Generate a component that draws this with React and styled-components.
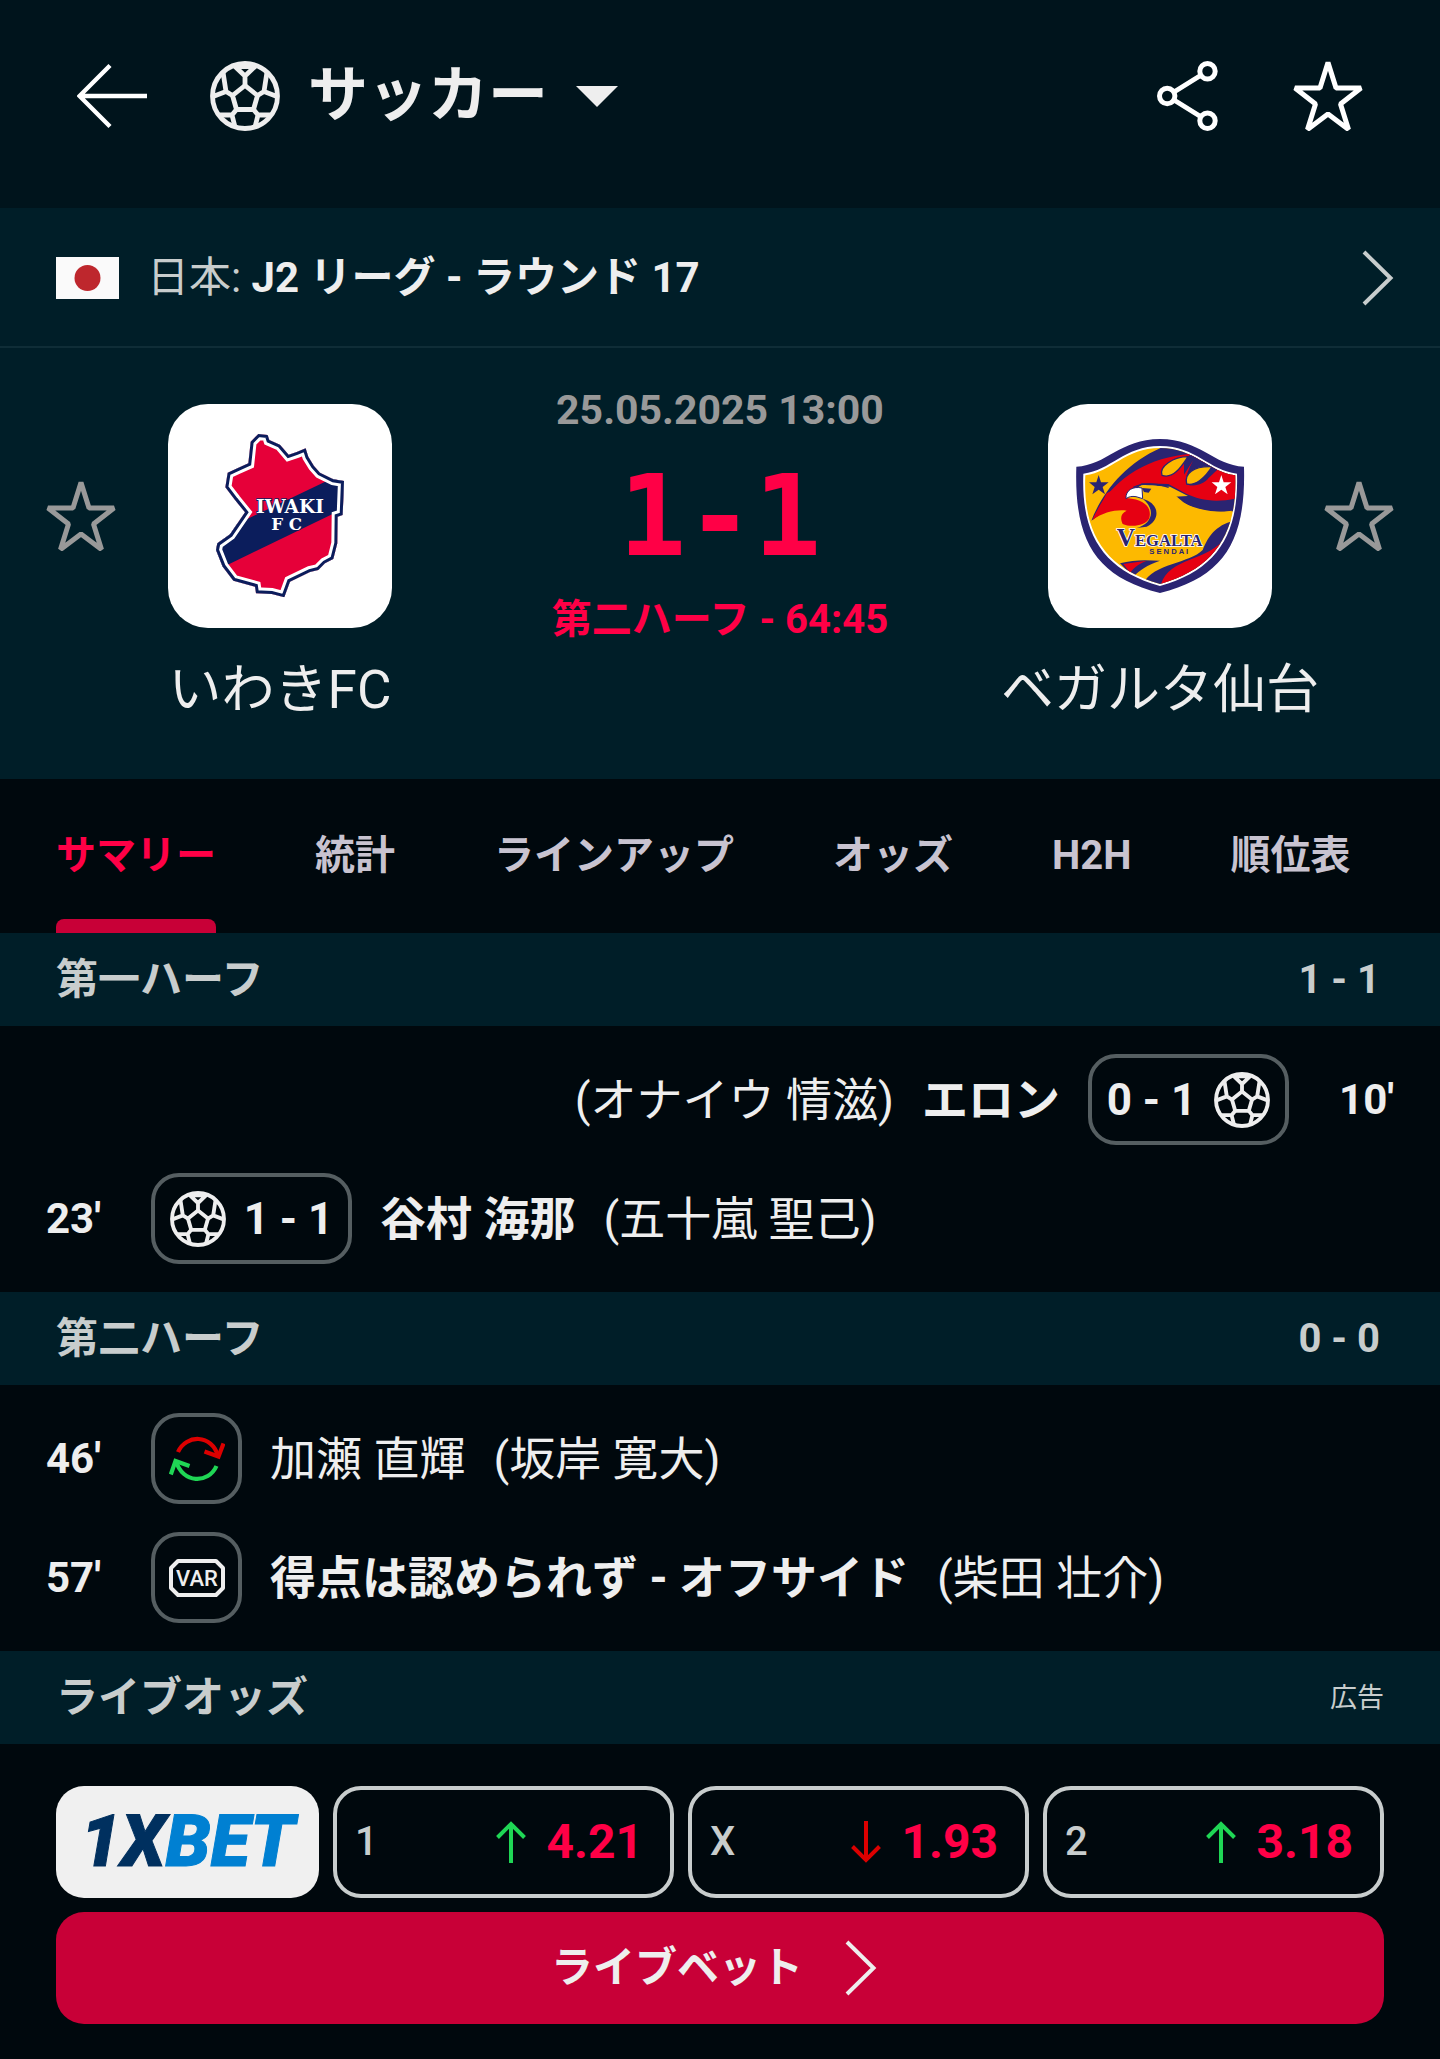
import React, { useState } from "react";
import styled, { createGlobalStyle } from "styled-components";

const color = {
  page: "#00080d",
  header: "#00141c",
  band: "#001e28",
  line: "#0f2d37",
  text: "#eeeeee",
  soft: "#c8cdcd",
  muted: "#999999",
  live: "#ff0046",
  brand: "#c80037",
  up: "#1fd655",
  down: "#dc0000",
  outline: "#555e61",
};

const GlobalStyle = createGlobalStyle`
  *, *::before, *::after { box-sizing: border-box; }
  body {
    margin: 0;
    background: ${color.page};
    color: ${color.text};
    font-family: Roboto, "Noto Sans CJK JP", sans-serif;
    font-size: 40px;
    line-height: 48px;
  }
  button {
    margin: 0;
    padding: 0;
    border: 0;
    background: none;
    color: inherit;
    font: inherit;
    cursor: pointer;
  }
  a { color: inherit; text-decoration: none; }
  svg { display: block; flex: none; }
`;

const Page = styled.div`
  min-height: 100vh;
`;

const Header = styled.header`
  display: flex;
  align-items: center;
  padding: 61px 77px 77px;
  background: ${color.header};
`;

const IconButton = styled.button`
  display: block;
  color: ${(p) => p.$tone || "#ffffff"};
`;

const SportButton = styled.button`
  display: flex;
  align-items: center;
  gap: 28px;
  margin-left: 63px;
  font-size: 60px;
  font-weight: 700;
  line-height: 70px;
`;

const HeaderActions = styled.div`
  display: flex;
  gap: 75px;
  margin-left: auto;
`;

const League = styled.a`
  display: flex;
  align-items: center;
  height: 140px;
  padding: 2px 46px 0 56px;
  border-bottom: 2px solid ${color.line};
  background: ${color.band};
`;

const LeagueName = styled.span`
  flex: 1;
  margin-left: 28px;
  color: ${color.soft};
  font-size: 42px;

  strong { color: ${color.text}; }
`;

const Match = styled.section`
  display: flex;
  align-items: flex-start;
  padding: 40px 46px 55px;
  background: ${color.band};
`;

const Side = styled.div`
  display: flex;
  flex-direction: ${(p) => (p.$away ? "row-reverse" : "row")};
  padding-top: 16px;
`;

const FavouriteSlot = styled.div`
  display: flex;
  align-items: center;
  height: 224px;
`;

const Team = styled.a`
  display: flex;
  flex-direction: column;
  align-items: center;
  gap: 28px;
  width: 328px;
  font-size: 53px;
  line-height: 68px;
`;

const Crest = styled.span`
  width: 224px;
  height: 224px;
  border-radius: 40px;
  background: #ffffff;
  overflow: hidden;
`;

const Centre = styled.div`
  flex: 1;
  display: flex;
  flex-direction: column;
  align-items: center;
  padding-top: 2px;
  font-weight: 700;
  line-height: 40px;
  white-space: nowrap;
`;

const Kickoff = styled.time`
  color: ${color.muted};
  font-size: 41px;
`;

const Score = styled.div`
  padding: 30px 0 28px;
  color: ${color.live};
  font-family: "DejaVu Sans Mono", monospace;
  font-size: 112px;
  line-height: 112px;
`;

const Status = styled.div`
  color: ${color.live};
`;

const Tabs = styled.nav`
  display: flex;
  gap: 99px;
  height: 154px;
  padding: 0 56px;
`;

const Tab = styled.button`
  position: relative;
  color: ${(p) => (p.$active ? color.live : "#c8c3d0")};
  font-weight: 700;
  white-space: nowrap;

  &::after {
    content: "";
    position: absolute;
    inset: auto 0 0;
    height: 14px;
    border-radius: 8px 8px 0 0;
    background: ${(p) => (p.$active ? color.brand : "transparent")};
  }
`;

const SectionBar = styled.div`
  display: flex;
  align-items: center;
  justify-content: space-between;
  height: 93px;
  padding: 0 56px;
  background: ${color.band};
  color: ${color.soft};
`;

const SectionTitle = styled.h2`
  margin: 0;
  font-size: 42px;
  font-weight: 700;
`;

const PeriodScore = styled.span`
  padding-right: 4px;
  font-weight: 700;
`;

const AdNote = styled.small`
  font-size: 27px;
`;

const Events = styled.ul`
  display: flex;
  flex-direction: column;
  gap: 28px;
  margin: 0;
  padding: 28px 46px;
  list-style: none;
`;

const Event = styled.li`
  display: flex;
  flex-direction: ${(p) => (p.$away ? "row-reverse" : "row")};
  align-items: center;
  gap: 28px;
  height: 91px;
  font-size: 46px;
  white-space: nowrap;
`;

const Minute = styled.span`
  width: 77px;
  font-size: 42px;
  font-weight: 700;
  text-align: ${(p) => (p.$away ? "right" : "left")};
`;

const Badge = styled.span`
  display: flex;
  flex-direction: ${(p) => (p.$away ? "row-reverse" : "row")};
  align-items: center;
  justify-content: center;
  gap: 18px;
  width: ${(p) => (p.$wide ? "201px" : "91px")};
  height: 91px;
  border: 4px solid ${color.outline};
  border-radius: 28px;
  font-size: 44px;
  font-weight: 700;
`;

const Odds = styled.section`
  display: grid;
  grid-template-columns: 263px repeat(3, 1fr);
  gap: 14px;
  padding: 42px 56px 35px;
`;

const Bookmaker = styled.a`
  display: flex;
  align-items: center;
  justify-content: center;
  height: 112px;
  border-radius: 28px;
  background: #f0f0f0;
  color: #0080d2;
  font-size: 72px;
  font-style: italic;
  font-weight: 900;
  -webkit-text-stroke: 1px currentColor;

  span { color: #00305f; }
`;

const Odd = styled.button`
  display: flex;
  align-items: center;
  gap: 20px;
  height: 112px;
  padding: 0 27px 0 18px;
  border: 4px solid ${color.soft};
  border-radius: 28px;
  color: ${(p) => (p.$rise ? color.up : color.down)};
`;

const Outcome = styled.span`
  margin-right: auto;
  color: ${color.soft};
  font-weight: 500;
`;

const Price = styled.span`
  color: ${color.live};
  font-size: 48px;
  font-weight: 700;
`;

const BetButton = styled.button`
  grid-column: 1 / -1;
  display: flex;
  align-items: center;
  justify-content: center;
  gap: 42px;
  height: 112px;
  padding-right: 12px;
  border-radius: 28px;
  background: ${color.brand};
  font-size: 42px;
  font-weight: 700;
`;

const BackIcon = () => (
  <svg width="70" height="70" viewBox="0 0 70 70" fill="none" stroke="currentColor" strokeWidth="4.4" aria-hidden="true">
    <path d="M33 4.5 2.5 35 33 65.5M3 35H70" />
  </svg>
);

const ShareIcon = () => (
  <svg width="61" height="70" viewBox="0 0 61 70" fill="none" stroke="currentColor" strokeWidth="5" aria-hidden="true">
    <circle cx="50.5" cy="10.2" r="7.7" />
    <circle cx="10.2" cy="35" r="7.7" />
    <circle cx="50.5" cy="59.8" r="7.7" />
    <path d="M17 31 43.5 14.5M17 39l26.5 16.5" />
  </svg>
);

const StarIcon = () => (
  <svg width="70" height="70" viewBox="0 0 70 70" fill="none" stroke="currentColor" strokeWidth="5" strokeLinejoin="bevel" aria-hidden="true">
    <path d="M35 1.5 43 27H68L47.5 43 55.5 68.5 35 53 14.5 68.5 22.5 43 2 27H27Z" />
  </svg>
);

const BallIcon = ({ size }) => (
  <svg width={size} height={size} viewBox="0 0 70 70" fill="none" stroke="currentColor" strokeWidth="4.8" strokeLinejoin="round" aria-hidden="true">
    <circle cx="35" cy="35" r="32.5" />
    <path d="M35 24.500 47.500 34.500 43.500 48.500H26.500L22.500 34.500Z" />
    <path d="M35 24.500V15L25 5.500H45L35 15" />
    <path d="M13 11 16 30.500 22.500 34.500M16 30.500 3 35.500M57 11 54 30.500 47.500 34.500M54 30.500 67 35.500" />
    <path d="M26.500 48.500 22 54H9M22 54 25 66M43.500 48.500 48 54H61M48 54 45 66" />
  </svg>
);

const CaretIcon = () => (
  <svg width="42" height="21" viewBox="0 0 42 21" fill="currentColor" aria-hidden="true">
    <path d="M0 0H42L21 21Z" />
  </svg>
);

const ChevronIcon = ({ tone = "currentColor" }) => (
  <svg width="32" height="56" viewBox="0 0 32 56" fill="none" stroke={tone} strokeWidth="4" aria-hidden="true">
    <path d="M2 2 28.5 28 2 54" />
  </svg>
);

const FlagJapan = () => (
  <svg width="63" height="42" viewBox="0 0 63 42" role="img" aria-label="日本">
    <path fill="#fafafa" d="M0 0H63V42H0Z" />
    <circle cx="31.5" cy="21" r="13" fill="#be272d" />
  </svg>
);

const ArrowIcon = ({ rise }) => (
  <svg width="30" height="42" viewBox="0 0 30 42" fill="none" stroke="currentColor" strokeWidth="4" aria-hidden="true">
    <path d={rise ? "M15 42V3M1.5 16.5 15 3 28.5 16.5" : "M15 0V39M1.5 25.5 15 39 28.5 25.5"} />
  </svg>
);

const SwapIcon = () => (
  <svg width="56" height="46" viewBox="0 0 56 46" fill="none" strokeWidth="4.2" aria-hidden="true">
    <g stroke={color.down}>
      <path d="M9 16C17-2 43-2 49 20" />
      <path d="M35.5 15.5 49.5 20.500 54.5 7.5" />
    </g>
    <g stroke={color.up}>
      <path d="M47.5 30C39.5 48 13.5 48 7 25" />
      <path d="M20.5 30 6.5 25 1.8 38.5" />
    </g>
  </svg>
);

const VarIcon = () => (
  <svg width="56" height="38" viewBox="0 0 56 38" aria-hidden="true">
    <path d="M9 2H47L54 9V29L47 36H9L2 29V9Z" fill="none" stroke="currentColor" strokeWidth="4" strokeLinejoin="round" />
    <text x="28" y="27" textAnchor="middle" fill="currentColor" fontFamily="Roboto, sans-serif" fontSize="22" fontWeight="500">VAR</text>
  </svg>
);

const IWAKI =
  "M775 252 803 255 808 270 840 284 866 314 890 306 917 295 925 320 942 348 960 368 1000 388 1032 393 1028 495 1013 500 1012 580 1000 627 975 640 955 660 930 666 870 695 853 742 815 732 768 730 765 710 700 692 668 650 648 600 652 580 690 553 735 487 705 450 676 412 683 368 712 355 745 340 752 275Z";

const IwakiCrest = () => (
  <svg width="224" height="224" viewBox="504 162 672 672" role="img" aria-label="いわきFC">
    <clipPath id="iwaki"><path d={IWAKI} /></clipPath>
    <g clipPath="url(#iwaki)">
      <path fill="#e60039" d="M504 162H1176V834H504Z" />
      <path fill="#0b1d5c" d="M1060 355 700 527 600 610 640 665 1060 462Z" />
      <path fill="none" stroke="#ffffff" strokeWidth="36" d={IWAKI} />
      <path fill="none" stroke="#0b1d5c" strokeWidth="18" d={IWAKI} />
    </g>
    <g fill="#ffffff" fontFamily="'DejaVu Serif', serif" fontWeight="700" textAnchor="middle" stroke="#0b1d5c" strokeWidth="5" paintOrder="stroke">
      <text x="870" y="488" fontSize="56">IWAKI</text>
      <text x="860" y="541" fontSize="50">F C</text>
    </g>
  </svg>
);

const VegaltaCrest = () => (
  <svg width="224" height="224" viewBox="264 162 672 672" role="img" aria-label="ベガルタ仙台">
    <clipPath id="vegalta">
      <path d="M376 376C455 366 495 294 600 294S745 366 826 376C832 550 765 655 600 702 435 655 368 550 376 376Z" />
    </clipPath>
    <path fill="#2a2472" d="M349 350C440 346 480 267 600 267S760 346 852 350C858 570 795 680 600 729 405 680 342 570 349 350Z" />
    <path fill="#ffffff" d="M370 371C452 362 492 288 600 288S748 362 831 371C837 555 770 660 600 708 430 660 363 555 370 371Z" />
    <g clipPath="url(#vegalta)">
      <path fill="#fdb900" d="M360 280H840V720H360Z" />
      <path fill="#2a2472" d="M394 512C430 420 510 320 640 280L850 300V480C790 492 700 486 642 440L684 438 630 410 545 404Z" />
      <path fill="#e60012" d="M398 508C450 390 560 322 690 312L760 350 850 370V440C770 462 720 450 680 432L625 402 545 400Z" />
      <path fill="#2a2472" d="M672 330 690 314C720 316 750 330 780 352L745 385C735 400 705 412 684 404 668 392 690 350 700 330L672 374Z" />
      <path fill="#fdb900" stroke="#2a2472" strokeWidth="4" d="M606 376C596 350 640 320 684 320 664 350 640 388 606 376ZM680 402C672 370 700 348 756 350 735 385 705 408 680 402Z" />
      <path fill="#fdb900" d="M398 514C440 490 470 480 482 530L500 540 575 525C600 490 580 460 548 444L535 416C560 404 590 402 625 418L655 444C700 486 760 492 815 482L812 520C760 520 740 570 735 600L560 620 440 600Z" />
      <path fill="#e60012" d="M500 444C560 450 575 475 568 505 555 530 510 532 488 522 480 505 482 490 500 482 470 478 430 486 398 510L440 430 500 400Z" />
      <path fill="#2a2472" d="M548 446C600 460 602 510 560 530L530 534C575 522 590 480 548 446Z" />
      <path fill="#ffffff" stroke="#2a2472" strokeWidth="3" d="M498 446C496 420 520 408 546 414L548 446 528 440C515 438 506 440 498 446Z" />
      <path fill="none" stroke="#2a2472" strokeWidth="4" d="M520 412C550 398 590 400 626 412" />
      <path fill="#2a2472" d="M546 414 574 416 566 428 552 426Z" />
      <path fill="#2a2472" d="M812 515C760 530 740 570 728 600 690 640 580 640 550 700L600 720 850 640ZM480 640C520 628 560 630 600 632 560 645 540 660 520 680Z" />
      <path fill="#e60012" d="M800 560C740 640 610 620 600 720L760 690ZM490 642 560 632C530 645 520 655 510 668Z" />
      <path fill="#2a2472" d="M416 375 423 397H446L428 411 435 433 416 419 397 433 404 411 387 397H409Z" />
      <path fill="#ffffff" d="M784 375 791 397H814L796 411 803 433 784 419 765 433 772 411 755 397H777Z" />
    </g>
    <g fontWeight="700" fill="#2a2472">
      <text x="470" y="588" fontSize="50" fontFamily="'Liberation Serif', serif" stroke="#ffffff" strokeWidth="5" paintOrder="stroke">
        <tspan fontSize="76">V</tspan>EGALTA
      </text>
      <text x="626" y="612" fontSize="23" textAnchor="middle" fontFamily="'Liberation Sans', sans-serif">S E N D A I</text>
    </g>
  </svg>
);

const TABS = ["サマリー", "統計", "ラインアップ", "オッズ", "H2H", "順位表"];

const PERIODS = [
  {
    title: "第一ハーフ",
    score: "1 - 1",
    events: [
      { minute: "10'", kind: "goal", score: "0 - 1", away: true, name: "エロン", bold: true, extra: "(オナイウ 情滋)" },
      { minute: "23'", kind: "goal", score: "1 - 1", name: "谷村 海那", bold: true, extra: "(五十嵐 聖己)" },
    ],
  },
  {
    title: "第二ハーフ",
    score: "0 - 0",
    events: [
      { minute: "46'", kind: "swap", name: "加瀬 直輝", extra: "(坂岸 寛大)" },
      { minute: "57'", kind: "var", name: "得点は認められず - オフサイド", bold: true, extra: "(柴田 壮介)" },
    ],
  },
];

const ODDS = [
  { outcome: "1", price: "4.21", rise: true },
  { outcome: "X", price: "1.93", rise: false },
  { outcome: "2", price: "3.18", rise: true },
];

function MatchEvent({ event }) {
  const { minute, kind, score, away, name, bold, extra } = event;
  return (
    <Event $away={away}>
      <Minute $away={away}>{minute}</Minute>
      <Badge $wide={kind === "goal"} $away={away}>
        {kind === "goal" && <BallIcon size={56} />}
        {kind === "goal" && <span>{score}</span>}
        {kind === "swap" && <SwapIcon />}
        {kind === "var" && <VarIcon />}
      </Badge>
      {bold ? <strong>{name}</strong> : <span>{name}</span>}
      <span>{extra}</span>
    </Event>
  );
}

function TeamSide({ name, crest, away }) {
  return (
    <Side $away={away}>
      <FavouriteSlot>
        <IconButton type="button" $tone={color.muted} aria-label={name}>
          <StarIcon />
        </IconButton>
      </FavouriteSlot>
      <Team href="#team">
        <Crest>{crest}</Crest>
        {name}
      </Team>
    </Side>
  );
}

export default function App() {
  const [tab, setTab] = useState(TABS[0]);
  return (
    <Page lang="ja">
      <GlobalStyle />
      <Header>
        <IconButton type="button" aria-label="戻る"><BackIcon /></IconButton>
        <SportButton type="button">
          <BallIcon size={70} />
          サッカー
          <CaretIcon />
        </SportButton>
        <HeaderActions>
          <IconButton type="button" aria-label="共有"><ShareIcon /></IconButton>
          <IconButton type="button" aria-label="お気に入り"><StarIcon /></IconButton>
        </HeaderActions>
      </Header>
      <main>
        <League href="#league">
          <FlagJapan />
          <LeagueName>
            日本: <strong>J2 リーグ - ラウンド 17</strong>
          </LeagueName>
          <ChevronIcon tone={color.soft} />
        </League>
        <Match>
          <TeamSide name="いわきFC" crest={<IwakiCrest />} />
          <Centre>
            <Kickoff dateTime="2025-05-25T13:00">25.05.2025 13:00</Kickoff>
            <Score>1-1</Score>
            <Status>第二ハーフ - 64:45</Status>
          </Centre>
          <TeamSide name="ベガルタ仙台" crest={<VegaltaCrest />} away />
        </Match>
        <Tabs>
          {TABS.map((label) => (
            <Tab key={label} type="button" $active={label === tab} onClick={() => setTab(label)}>
              {label}
            </Tab>
          ))}
        </Tabs>
        {PERIODS.map((period) => (
          <section key={period.title}>
            <SectionBar>
              <SectionTitle>{period.title}</SectionTitle>
              <PeriodScore>{period.score}</PeriodScore>
            </SectionBar>
            <Events>
              {period.events.map((event) => (
                <MatchEvent key={event.minute} event={event} />
              ))}
            </Events>
          </section>
        ))}
        <SectionBar>
          <SectionTitle>ライブオッズ</SectionTitle>
          <AdNote>広告</AdNote>
        </SectionBar>
        <Odds>
          <Bookmaker href="#bookmaker"><span>1X</span>BET</Bookmaker>
          {ODDS.map((odd) => (
            <Odd key={odd.outcome} type="button" $rise={odd.rise}>
              <Outcome>{odd.outcome}</Outcome>
              <ArrowIcon rise={odd.rise} />
              <Price>{odd.price}</Price>
            </Odd>
          ))}
          <BetButton type="button">
            ライブベット
            <ChevronIcon />
          </BetButton>
        </Odds>
      </main>
    </Page>
  );
}
